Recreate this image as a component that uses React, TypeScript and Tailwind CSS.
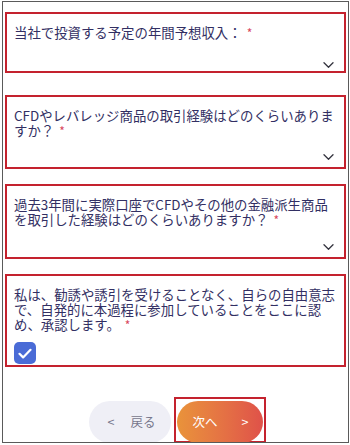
import type { ReactNode } from 'react';

const font = { fontFamily: '"Noto Sans CJK JP", "Noto Sans", sans-serif' };

function Chevron() {
  return (
    <svg width="11" height="6" viewBox="0 0 11 6" fill="none" className="block">
      <path d="M1 0.8l4.5 4.4 4.5-4.4" stroke="#34343f" strokeWidth="1.3" strokeLinecap="round" strokeLinejoin="round" />
    </svg>
  );
}

function Required() {
  return <span className="ml-[5px] text-[12px] text-[#d8475c]">*</span>;
}

interface SelectFieldProps {
  lines: ReactNode[];
  height: string;
  bottomPad: string;
  topGap: string;
}

function SelectField({ lines, height, bottomPad, topGap }: SelectFieldProps) {
  return (
    <div className={`${topGap} ${height} flex flex-col border-2 border-[#c4222e] pl-[7px] pr-[10px] pt-[11px] ${bottomPad}`}>
      <div className="text-[13.4px] leading-[15px] text-[#322f63] whitespace-nowrap">
        {lines.map((line, i) => (
          <div key={i}>{line}</div>
        ))}
      </div>
      <div className="mt-auto flex justify-end">
        <Chevron />
      </div>
    </div>
  );
}

export default function App() {
  return (
    <div className="w-[350px] h-[445px] bg-white" style={font}>
      <div className="ml-[2px] mt-[1px] w-[347px] h-[442px] border border-[#5a5a5a] overflow-hidden px-[2px]">
        <SelectField
          topGap="mt-[10px]"
          height="h-[61px]"
          bottomPad="pb-[3px]"
          lines={[
            <>
              当社で投資する予定の年間予想収入：<Required />
            </>,
          ]}
        />
        <SelectField
          topGap="mt-[22px]"
          height="h-[74px]"
          bottomPad="pb-[7px]"
          lines={[
            'CFDやレバレッジ商品の取引経験はどのくらいありま',
            <>
              すか？<Required />
            </>,
          ]}
        />
        <SelectField
          topGap="mt-[15px]"
          height="h-[75px]"
          bottomPad="pb-[7px]"
          lines={[
            '過去3年間に実際口座でCFDやその他の金融派生商品',
            <>
              を取引した経験はどのくらいありますか？<Required />
            </>,
          ]}
        />

        <div className="mt-[15px] h-[93px] flex flex-col border-2 border-[#c4222e] pl-[7px] pr-[8px] pt-[11px]">
          <div className="text-[13.4px] leading-[15px] text-[#322f63] whitespace-nowrap">
            <div>私は、勧誘や誘引を受けることなく、自らの自由意志</div>
            <div>で、自発的に本過程に参加していることをここに認</div>
            <div>
              め、承認します。<Required />
            </div>
          </div>
          <div className="mt-auto mb-[1px] w-[22px] h-[22px] rounded-[5px] bg-[#4a6bd6] flex items-center justify-center">
            <svg width="14" height="11" viewBox="0 0 14 11" fill="none">
              <path d="M1.5 5.8l3.6 3.6L12.5 1.8" stroke="white" strokeWidth="2.2" strokeLinecap="round" strokeLinejoin="round" />
            </svg>
          </div>
        </div>

        <div className="mt-[30px] flex justify-center items-start gap-[3px] pl-[3px]">
          <button className="mt-[4px] w-[82px] h-[42px] rounded-full bg-[#efeff6] flex items-center text-[12.5px] text-[#77778c]">
            <span className="ml-[19px]">&lt;</span>
            <span className="ml-[16px]">戻る</span>
          </button>
          <div className="border-2 border-[#c4222e] px-[1px] pt-[2px] h-[46px]">
            <button className="w-[86px] h-[42px] rounded-full bg-gradient-to-r from-[#e9933a] to-[#df5149] flex items-center text-[12.5px] text-white">
              <span className="ml-[16px]">次へ</span>
              <span className="ml-[24px]">&gt;</span>
            </button>
          </div>
        </div>
      </div>
    </div>
  );
}
